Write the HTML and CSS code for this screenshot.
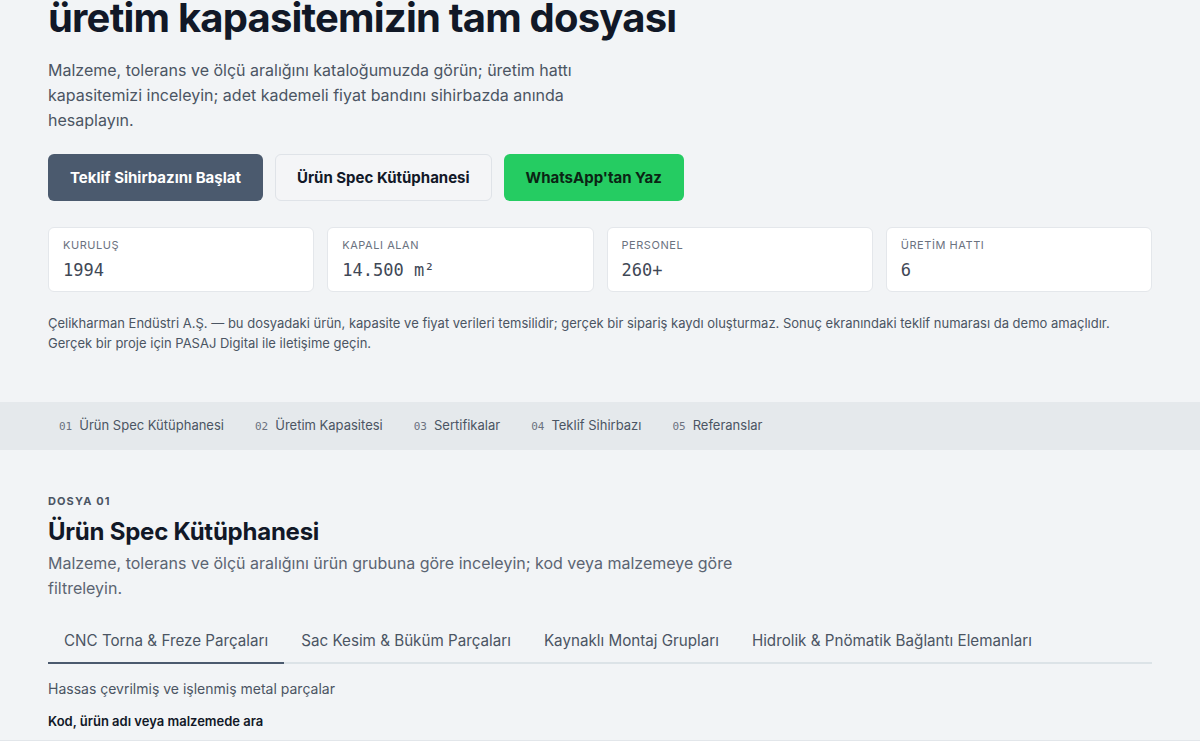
FILE: index.html
```html
<!DOCTYPE html>
<html lang="tr">
<head>
    <meta charset="UTF-8">
    <meta name="viewport" content="width=device-width, initial-scale=1.0">
    <title>Çelikharman Endüstri — Üretim Dosyası</title>
    <link rel="stylesheet" href="styles.css">
</head>
<body>
    <header class="hero">
        <h1 class="hero-title">üretim kapasitemizin tam dosyası</h1>
        <p class="hero-lead">Malzeme, tolerans ve ölçü aralığını kataloğumuzda görün; üretim hattı kapasitemizi inceleyin; adet kademeli fiyat bandını sihirbazda anında hesaplayın.</p>

        <div class="hero-actions">
            <a class="btn btn-dark" href="#sihirbaz">Teklif Sihirbazını Başlat</a>
            <a class="btn btn-light" href="#spec">Ürün Spec Kütüphanesi</a>
            <a class="btn btn-green" href="#whatsapp">WhatsApp'tan Yaz</a>
        </div>

        <div class="stats">
            <div class="stat">
                <div class="stat-label">Kuruluş</div>
                <div class="stat-value">1994</div>
            </div>
            <div class="stat">
                <div class="stat-label">Kapalı alan</div>
                <div class="stat-value">14.500 m²</div>
            </div>
            <div class="stat">
                <div class="stat-label">Personel</div>
                <div class="stat-value">260+</div>
            </div>
            <div class="stat">
                <div class="stat-label">Üretim hattı</div>
                <div class="stat-value">6</div>
            </div>
        </div>

        <p class="disclaimer">Çelikharman Endüstri A.Ş. — bu dosyadaki ürün, kapasite ve fiyat verileri temsilidir; gerçek bir sipariş kaydı oluşturmaz. Sonuç ekranındaki teklif numarası da demo amaçlıdır. Gerçek bir proje için PASAJ Digital ile iletişime geçin.</p>
    </header>

    <nav class="file-nav">
        <div class="file-nav-inner">
            <a href="#spec"><span class="num">01</span>Ürün Spec Kütüphanesi</a>
            <a href="#kapasite"><span class="num">02</span>Üretim Kapasitesi</a>
            <a href="#sertifika"><span class="num">03</span>Sertifikalar</a>
            <a href="#sihirbaz"><span class="num">04</span>Teklif Sihirbazı</a>
            <a href="#referans"><span class="num">05</span>Referanslar</a>
        </div>
    </nav>

    <section class="section" id="spec">
        <div class="eyebrow">Dosya 01</div>
        <h2 class="section-title">Ürün Spec Kütüphanesi</h2>
        <p class="section-lead">Malzeme, tolerans ve ölçü aralığını ürün grubuna göre inceleyin; kod veya malzemeye göre filtreleyin.</p>

        <div class="tabs">
            <button class="tab active">CNC Torna &amp; Freze Parçaları</button>
            <button class="tab">Sac Kesim &amp; Büküm Parçaları</button>
            <button class="tab">Kaynaklı Montaj Grupları</button>
            <button class="tab">Hidrolik &amp; Pnömatik Bağlantı Elemanları</button>
        </div>

        <p class="tab-desc">Hassas çevrilmiş ve işlenmiş metal parçalar</p>

        <label class="search-label" for="spec-search">Kod, ürün adı veya malzemede ara</label>
        <input class="search-input" id="spec-search" type="text">
    </section>
</body>
</html>
```

FILE: styles.css
```css
* {
    box-sizing: border-box;
}

body {
    margin: 0;
    background-color: #f2f4f6;
    color: #111827;
    font-family: 'Inter', 'Noto Sans', sans-serif;
}

.hero {
    padding: 0 48px;
}

/* the page is scrolled a little: the title's top sits above the fold */
.hero-title {
    margin: -5px 0 0;
    font-size: 40px;
    line-height: 46px;
    font-weight: 700;
    letter-spacing: -0.02em;
    color: #111827;
}

.hero-lead {
    margin: 17px 0 0;
    max-width: 576px;
    font-size: 16px;
    line-height: 25px;
    color: #4b5563;
}

.hero-actions {
    display: flex;
    gap: 12px;
    margin-top: 21px;
}

.btn {
    display: inline-block;
    padding: 14px 21px;
    border-radius: 6px;
    border: 1px solid transparent;
    font-size: 15px;
    line-height: 17px;
    font-weight: 700;
    text-decoration: none;
}

.btn-dark {
    background-color: #4b5a6e;
    color: #fff;
}

.btn-light {
    background-color: #f4f5f7;
    border-color: #dfe3e8;
    color: #111827;
}

.btn-green {
    background-color: #25cc62;
    color: #0b2414;
}

.stats {
    display: grid;
    grid-template-columns: repeat(4, 1fr);
    gap: 13px;
    margin-top: 26px;
}

.stat {
    background-color: #fff;
    border: 1px solid #e4e7eb;
    border-radius: 6px;
    padding: 10px 14px 9px;
}

.stat-label {
    font-size: 11px;
    line-height: 14px;
    letter-spacing: 0.05em;
    text-transform: uppercase;
    color: #6b7280;
}

.stat-value {
    margin-top: 6px;
    font-family: 'DejaVu Sans Mono', 'Liberation Mono', monospace;
    font-size: 17px;
    line-height: 24px;
    color: #3f4856;
}

.disclaimer {
    margin: 21px 0 0;
    font-size: 13px;
    line-height: 20px;
    color: #4b5563;
}

.file-nav {
    margin-top: 49px;
    background-color: #e5e9ec;
}

.file-nav-inner {
    display: flex;
    gap: 9px;
    padding: 0 48px;
    height: 48px;
    align-items: center;
}

.file-nav a {
    padding: 6px 11px;
    font-size: 13px;
    line-height: 18px;
    color: #4b5563;
    text-decoration: none;
}

.file-nav .num {
    font-family: 'DejaVu Sans Mono', monospace;
    font-size: 11px;
    margin-right: 7px;
    color: #6b7280;
}

.section {
    padding: 43px 48px 0;
}

.eyebrow {
    font-size: 11px;
    line-height: 16px;
    font-weight: 700;
    letter-spacing: 0.1em;
    text-transform: uppercase;
    color: #4b5563;
}

.section-title {
    margin: 8px 0 0;
    font-size: 24px;
    line-height: 30px;
    font-weight: 700;
    letter-spacing: -0.01em;
    color: #111827;
}

.section-lead {
    margin: 4px 0 0;
    max-width: 720px;
    font-size: 16px;
    line-height: 25px;
    color: #5b6472;
}

.tabs {
    display: flex;
    margin-top: 20px;
    border-bottom: 2px solid #dce3e7;
    width: 1104px;
}

.tab {
    margin-bottom: -2px;
    padding: 10px 16px 11px;
    margin-right: 1px;
    background: none;
    border: 0;
    border-bottom: 2px solid transparent;
    font-family: inherit;
    font-size: 15.2px;
    line-height: 20px;
    color: #4b5563;
    cursor: pointer;
}

.tab.active {
    border-bottom-color: #4b5a6e;
}

.tab-desc {
    margin: 15px 0 0;
    font-size: 14px;
    line-height: 20px;
    color: #4b5563;
}

.search-label {
    display: block;
    margin-top: 12px;
    font-size: 13px;
    line-height: 20px;
    font-weight: 600;
    color: #111827;
}

.search-input {
    display: block;
    margin: 9px -48px 0;
    width: calc(100% + 96px);
    height: 44px;
    border: 0;
    border-top: 1px solid #e2e6ea;
    background-color: #fff;
}
```
